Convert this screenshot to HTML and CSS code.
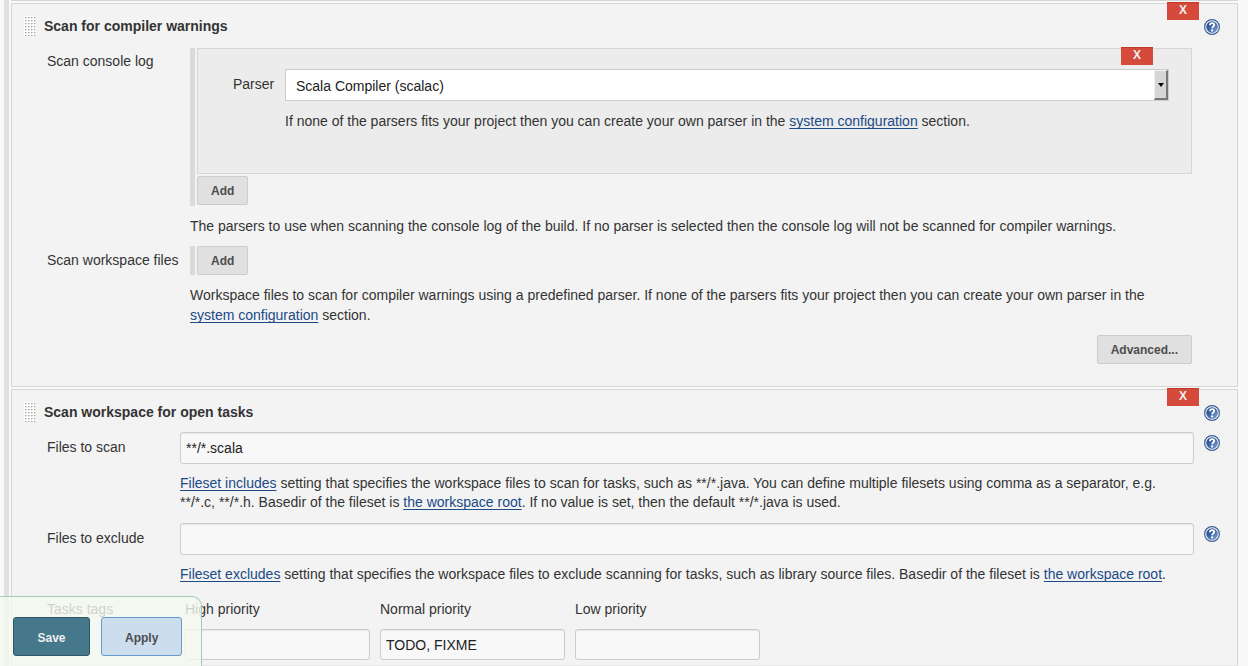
FILE: index.html
```html
<!DOCTYPE html>
<html lang="en">
<head>
<meta charset="utf-8">
<title>Job configuration</title>
<link rel="stylesheet" href="styles.css">
</head>
<body>
<svg class="defs" aria-hidden="true">
  <defs>
    <linearGradient id="help-fill" x1="0" y1="0" x2="1" y2="1">
      <stop offset="0" stop-color="#1d3f7c"/>
      <stop offset="0.5" stop-color="#3f69a8"/>
      <stop offset="1" stop-color="#8fb0dc"/>
    </linearGradient>
    <pattern id="grip-dots" width="3" height="3" patternUnits="userSpaceOnUse">
      <rect width="3" height="3" fill="#fdfdfd"/>
      <rect x="1" y="1" width="2" height="1" fill="#d0d0cc"/>
      <rect x="1" y="2" width="1" height="1" fill="#dcdcd8"/>
      <rect x="1" y="1" width="1" height="1" fill="#a8a8a4"/>
    </pattern>
    <symbol id="help" viewBox="0 0 16 16">
      <circle cx="8" cy="8" r="7.4" fill="#fff" stroke="#3c5f97" stroke-width="1.2"/>
      <circle cx="8" cy="8" r="5.5" fill="url(#help-fill)" stroke="#31568f" stroke-width="0.5"/>
      <path d="M5.9 6.300C6 4.700 6.900 4.100 8 4.100c1.300 0 2.200.800 2.200 1.900 0 1.500-2.100 1.500-2.100 3.300" fill="none" stroke="#fff" stroke-width="1.800"/>
      <circle cx="8.100" cy="11.400" r="1.100" fill="#fff"/>
    </symbol>
    <symbol id="grip" viewBox="0 0 12 20">
      <rect width="12" height="20" fill="url(#grip-dots)"/>
    </symbol>
  </defs>
</svg>
<main class="config">
  <div class="panel-end"></div>

  <section class="panel compiler">
    <button class="delete" type="button">X</button>
    <header class="panel-head">
      <svg class="grip"><use href="#grip"/></svg>
      <h2 class="title">Scan for compiler warnings</h2>
      <button class="help" type="button" aria-label="Help for compiler warnings"><svg class="help-icon"><use href="#help"/></svg></button>
    </header>
    <div class="row">
      <div class="label">Scan console log</div>
      <div class="field">
        <div class="repeat">
          <div class="panel nested">
            <button class="delete" type="button">X</button>
            <label class="parser-label" for="parser">Parser</label>
            <div class="parser-field">
              <div class="select-wrap">
                <select id="parser" class="select"><option>Scala Compiler (scalac)</option></select>
                <span class="select-arrow"></span>
              </div>
              <p class="hint">If none of the parsers fits your project then you can create your own parser in the <a class="link" href="#config">system configuration</a> section.</p>
            </div>
          </div>
          <button class="button" type="button">Add</button>
        </div>
        <p class="hint">The parsers to use when scanning the console log of the build. If no parser is selected then the console log will not be scanned for compiler warnings.</p>
      </div>
    </div>
    <div class="row second">
      <div class="label">Scan workspace files</div>
      <div class="field">
        <div class="repeat single">
          <button class="button" type="button">Add</button>
        </div>
        <p class="hint">Workspace files to scan for compiler warnings using a predefined parser. If none of the parsers fits your project then you can create your own parser in the <a class="link" href="#config">system configuration</a> section.</p>
        <div class="actions"><button class="button" type="button">Advanced...</button></div>
      </div>
    </div>
  </section>

  <section class="panel tasks">
    <button class="delete" type="button">X</button>
    <header class="panel-head">
      <svg class="grip"><use href="#grip"/></svg>
      <h2 class="title">Scan workspace for open tasks</h2>
      <button class="help" type="button" aria-label="Help for open tasks"><svg class="help-icon"><use href="#help"/></svg></button>
    </header>
    <div class="row">
      <label class="label" for="scan">Files to scan</label>
      <div class="field">
        <input id="scan" class="input" type="text" value="**/*.scala">
        <p class="hint"><a class="link" href="#fileset">Fileset includes</a> setting that specifies the workspace files to scan for tasks, such as **/*.java. You can define multiple filesets using comma as a separator, e.g. **/*.c, **/*.h. Basedir of the fileset is <a class="link" href="#root">the workspace root</a>. If no value is set, then the default **/*.java is used.</p>
      </div>
      <button class="help" type="button" aria-label="Help for files to scan"><svg class="help-icon"><use href="#help"/></svg></button>
    </div>
    <div class="row exclude-row">
      <label class="label" for="exclude">Files to exclude</label>
      <div class="field">
        <input id="exclude" class="input" type="text">
        <p class="hint"><a class="link" href="#fileset">Fileset excludes</a> setting that specifies the workspace files to exclude scanning for tasks, such as library source files. Basedir of the fileset is <a class="link" href="#root">the workspace root</a>.</p>
      </div>
      <button class="help" type="button" aria-label="Help for files to exclude"><svg class="help-icon"><use href="#help"/></svg></button>
    </div>
    <div class="row tags-row">
      <div class="label">Tasks tags</div>
      <div class="field tags">
        <label class="tag">High priority<input class="input" type="text"></label>
        <label class="tag">Normal priority<input class="input" type="text" value="TODO, FIXME"></label>
        <label class="tag">Low priority<input class="input" type="text"></label>
      </div>
    </div>
  </section>
</main>
<div class="sticker">
  <button class="submit save" type="submit">Save</button>
  <button class="submit apply" type="button">Apply</button>
</div>
</body>
</html>
```
FILE: styles.css
```css
* {
  box-sizing: border-box;
}

body {
  margin: 0;
  background: #f9f9f9;
  color: #333;
  font: 14px/20px "Liberation Sans", Arial, sans-serif;
}

button,
input,
select {
  margin: 0;
  font-family: inherit;
}

.defs {
  position: absolute;
  width: 0;
  height: 0;
}

.config {
  margin: 0 10px 0 4px;
  padding-left: 2px;
  border-left: 5px solid #e0e0e0;
}

.panel-end {
  height: 1px;
  background: #d6d6d6;
}

.panel {
  position: relative;
  margin-top: 2px;
  border: 1px solid #d6d6d6;
  background: #f3f3f3;
}

.compiler {
  padding-bottom: 22px;
}

.tasks {
  padding-bottom: 5px;
  border-bottom-color: #e8e8e8;
}

.panel-head {
  display: flex;
  padding: 12px 17px 0 12px;
}

.grip {
  width: 12px;
  height: 20px;
  margin-right: 8px;
}

.title {
  flex: 1;
  margin: 0;
  font-size: 14px;
  line-height: 20px;
}

.delete {
  position: absolute;
  top: -2px;
  right: 38px;
  width: 32px;
  height: 18px;
  padding: 0 0 2px;
  border: 0;
  border-top: 1px solid #c03a2c;
  background: #d54a3a;
  color: #f0f0f0;
  font-size: 12px;
  font-weight: bold;
  line-height: 15px;
}

.help {
  flex: none;
  width: 16px;
  height: 16px;
  margin-top: 3px;
  padding: 0;
  border: 0;
  background: none;
}

.help-icon {
  display: block;
  width: 16px;
  height: 16px;
}

.row {
  display: flex;
  padding: 12px 45px 0 35px;
}

.row.second {
  padding-top: 10px;
}

.label {
  flex: none;
  width: 143px;
  padding-top: 3px;
}

.second .label {
  padding-top: 4px;
}

.field {
  flex: 1;
  min-width: 0;
}

.repeat {
  padding-left: 2px;
  border-left: 5px solid #dadada;
  padding-bottom: 1px;
}

.repeat.single {
  padding-bottom: 0;
}

.nested {
  display: flex;
  min-height: 126px;
  margin: 0 0 2px;
  padding: 20px 22px 20px 35px;
  background: #ececec;
}

.parser-label {
  flex: none;
  width: 52px;
  padding-top: 5px;
}

.parser-field {
  flex: 1;
}

.select-wrap {
  position: relative;
}

.select {
  display: block;
  width: 100%;
  height: 32px;
  padding: 2px 24px 0 10px;
  appearance: none;
  border: 1px solid #ccc;
  border-radius: 0;
  background: #fff;
  color: #222;
  font-size: 14px;
}

.select-arrow {
  position: absolute;
  top: 1px;
  right: 1px;
  width: 14px;
  height: 30px;
  border: 1px solid #f1f1f1;
  border-right: 2px solid #777;
  border-bottom: 2px solid #777;
  background: #d6d6d6;
  pointer-events: none;
}

.select-arrow::after {
  position: absolute;
  top: 12px;
  left: 3px;
  border: 3px solid transparent;
  border-top: 4px solid #000;
  border-bottom: 0;
  content: "";
}

.hint {
  margin: 10px 0 0;
}

.repeat.single + .hint {
  margin-right: 10px;
}

.link {
  color: #204a87;
  text-decoration: underline 1px;
  text-decoration-skip-ink: none;
  text-underline-offset: 2px;
}

.button {
  display: block;
  height: 29px;
  padding: 0 13px;
  border: 1px solid #ccc;
  border-radius: 2px;
  background: #e0e0e0;
  color: #4d4d4d;
  font-size: 12px;
  font-weight: bold;
}

.actions {
  display: flex;
  justify-content: flex-end;
  margin-top: 10px;
}

.tasks .row {
  padding: 10px 17px 0 35px;
}

.tasks .exclude-row {
  padding-top: 11px;
}

.tasks .label {
  width: 133px;
  padding-top: 5px;
}

.tasks .hint {
  line-height: 19px;
}

.input {
  display: block;
  width: 100%;
  height: 32px;
  padding: 0 5px;
  border: 1px solid #ccc;
  border-radius: 3px;
  background: #f8f8f8;
  box-shadow: inset 0 1px 1px rgba(0, 0, 0, 0.075);
  color: #222;
  font-size: 14px;
}

.row .help {
  margin-left: 10px;
}

.tasks .tags-row {
  padding-top: 15px;
}

.tasks .tags-row .label {
  padding-top: 0;
}

.tags {
  display: flex;
  gap: 10px;
  padding-left: 5px;
}

.tag {
  width: 185px;
}

.tag .input {
  height: 31px;
  margin-top: 10px;
}

.sticker {
  position: fixed;
  bottom: 0;
  left: 0;
  display: flex;
  gap: 11px;
  padding: 20px 19px 10px 13px;
  border-top: 1px solid #a5cdb5;
  border-right: 1px solid #a5cdb5;
  border-top-right-radius: 10px;
  background: rgba(245, 249, 240, 0.8);
}

.submit {
  height: 39px;
  border: 1px solid #2f5665;
  border-radius: 3px;
  font-size: 12px;
  font-weight: bold;
}

.save {
  min-width: 77px;
  padding: 2px 23px 0;
  background: #45788a;
  color: #eee;
}

.apply {
  padding: 2px 23px 0;
  border-color: #6699cc;
  background: #ccddee;
  color: #4d4d4d;
}
```
